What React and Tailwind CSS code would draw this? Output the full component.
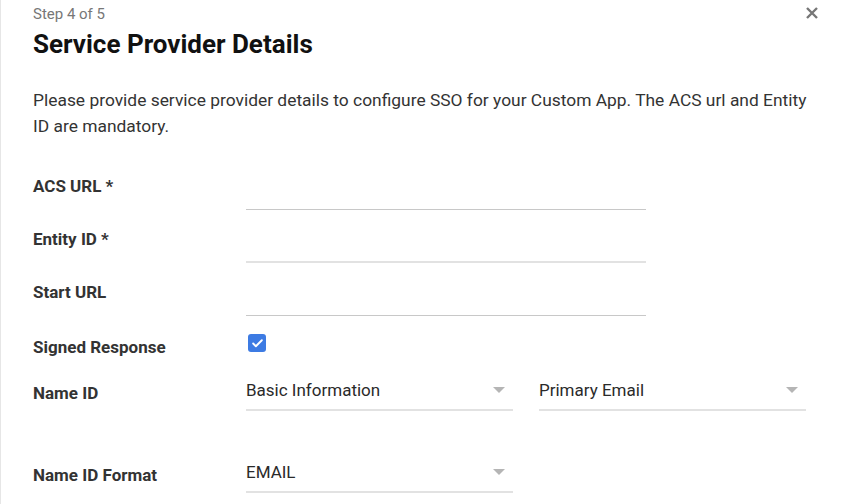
import { Check } from 'lucide-react';

function Caret() {
  return (
    <svg width="12" height="6" viewBox="0 0 12 6" className="shrink-0">
      <path d="M0 0h12L6 6z" fill="#b5b5b5" />
    </svg>
  );
}

function TextRow({ label, line }) {
  return (
    <div className="flex h-[53px]">
      <div className="w-[213px] pt-[14px] text-[17px] leading-5 font-bold text-[#333]">{label}</div>
      <div className={`w-[400px] h-[48px] ${line}`} />
    </div>
  );
}

function Select({ value }) {
  return (
    <div className="w-[267px] flex items-center justify-between pb-[7px] border-b-2 border-[#e2e2e2]">
      <span className="text-[17px] leading-6 text-[#2a2a2a]">{value}</span>
      <span className="mr-[8px]"><Caret /></span>
    </div>
  );
}

export default function App() {
  return (
    <div className="w-[850px] h-[504px] overflow-hidden bg-white border-l border-[#e6e6e6] pl-[32px] pr-[32px] pt-[6px] font-['Roboto','Liberation_Sans',sans-serif]">
      <div className="flex items-start justify-between">
        <p className="text-[15px] leading-4 text-[#777]">Step 4 of 5</p>
        <svg width="12" height="12" viewBox="0 0 12 12" className="mt-[1px]">
          <path d="M1 1l10 10M11 1L1 11" stroke="#777" strokeWidth="2.4" />
        </svg>
      </div>
      <h2 className="mt-[6px] text-[26px] leading-8 font-bold text-[#111]">Service Provider Details</h2>
      <p className="mt-[27px] text-[17.4px] leading-[26px] text-[#333]">
        Please provide service provider details to configure SSO for your Custom App. The ACS url and Entity ID are mandatory.
      </p>

      <div className="mt-[23px]">
        <TextRow label="ACS URL *" line="border-b border-[#c8c8c8]" />
        <TextRow label="Entity ID *" line="border-b-2 border-[#e2e2e2]" />
        <TextRow label="Start URL" line="border-b border-[#c8c8c8]" />
      </div>

      <div className="flex pt-[16px]">
        <div className="w-[215px] text-[17px] leading-5 font-bold text-[#333]">Signed Response</div>
        <div className="mt-[-3px] w-[18px] h-[18px] rounded-[3px] bg-[#3d7be3] flex items-center justify-center">
          <Check size={13} strokeWidth={3.5} color="#fff" />
        </div>
      </div>

      <div className="flex mt-[21px]">
        <div className="w-[213px] pt-[5px] text-[17px] leading-5 font-bold text-[#333]">Name ID</div>
        <div className="flex gap-[26px]">
          <Select value="Basic Information" />
          <Select value="Primary Email" />
        </div>
      </div>

      <div className="flex mt-[49px]">
        <div className="w-[213px] pt-[5px] text-[17px] leading-5 font-bold text-[#333]">Name ID Format</div>
        <Select value="EMAIL" />
      </div>
    </div>
  );
}
